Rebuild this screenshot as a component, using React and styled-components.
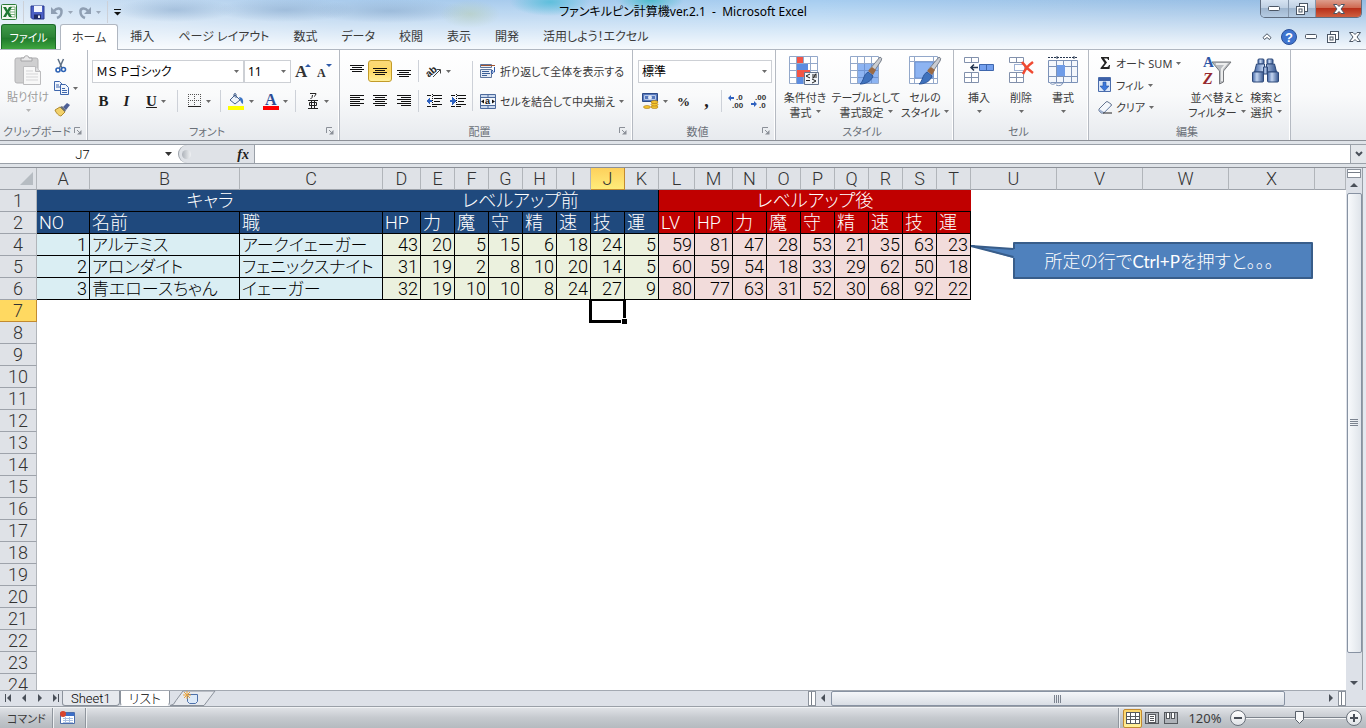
import React, { useState } from "react";
import styled, { createGlobalStyle, css } from "styled-components";

const uiFont = `"Noto Sans", "Noto Sans CJK JP", sans-serif`;
const cellFont = `Roboto, "Noto Sans CJK JP", sans-serif`;

const GlobalStyle = createGlobalStyle`
    * {
        box-sizing: border-box;
    }
    body {
        margin: 0;
        overflow: hidden;
        font-family: ${uiFont};
        font-size: 12px;
        line-height: 15px;
        color: #3b3b3b;
        font-feature-settings: "palt";
    }
    button, select, input {
        font: inherit;
        font-feature-settings: inherit;
        color: inherit;
        margin: 0;
        padding: 0;
        border: none;
        background: none;
        border-radius: 0;
        outline: none;
    }
    svg {
        display: block;
        flex: none;
        overflow: visible;
    }
`;

const Window = styled.div`
    display: flex;
    flex-direction: column;
    height: 100vh;
    background: #dfe3e8;
`;

/* ---------- title bar and tabs ---------- */

const Glass = styled.header`
    background:
        radial-gradient(ellipse 40px 14px at 550px 2px, #5fbfdc, transparent),
        radial-gradient(ellipse 34px 12px at 650px 0px, #4fbccd, transparent),
        radial-gradient(ellipse 30px 14px at 470px 14px, #b3c9a877, transparent),
        radial-gradient(ellipse 60px 12px at 175px 10px, #7d9fc477, transparent),
        radial-gradient(ellipse 70px 12px at 285px 10px, #7d9fc477, transparent),
        radial-gradient(ellipse 80px 12px at 390px 11px, #7d9fc477, transparent),
        linear-gradient(to bottom, transparent, #ffffff88 60%, #ffffffe6),
        linear-gradient(to right, #d5e5f5, #a9cbec 25%, #a6cdf0 60%, #9fc4e8 78%, #93bbe3);
    border-bottom: 1px solid #b0b7c1;
`;

const TitleBar = styled.div`
    display: grid;
    grid-template-columns: 1fr auto 1fr;
    height: 24px;
`;

const QuickAccess = styled.div`
    display: flex;
    align-items: center;
    gap: 5px;
    padding-left: 1px;
`;

const Title = styled.h1`
    margin: 0;
    font-size: 12px;
    font-weight: 400;
    line-height: 23px;
    color: #000;
    white-space: nowrap;
`;

const WindowButtons = styled.div`
    display: flex;
    justify-self: end;
    height: 18px;
    margin-right: 4px;
    border: 1px solid #5f6d80;
    border-top: none;
    border-radius: 0 0 5px 5px;
    overflow: hidden;
`;

const WindowButton = styled.button`
    display: flex;
    align-items: center;
    justify-content: center;
    width: ${(props) => (props.$close ? "46px" : "27px")};
    border-left: 1px solid #8495aa;
    background: ${(props) =>
        props.$close
            ? "linear-gradient(#dd9d8c, #cf6a52 45%, #b8301a 50%, #cf5f40)"
            : "linear-gradient(#d6e3f1, #bfd0e3 45%, #9fb6cf 50%, #b5cbe2)"};
    &:first-child {
        border-left: none;
    }
`;

const TabBar = styled.nav`
    display: flex;
    height: 25px;
    padding-left: 1px;
`;

const FileTab = styled.button`
    width: 55px;
    margin-right: 4px;
    border: 1px solid #1c6b2a;
    border-bottom: none;
    border-radius: 3px 3px 0 0;
    background: linear-gradient(#3f9b4a, #2b8336 50%, #1f7a2c 55%, #3fa63f);
    color: #fff;
    font-size: 11px;
`;

const Tab = styled.button`
    padding: 0 12px;
    white-space: nowrap;
    border: 0 solid #b0b7c1;
    ${(props) =>
        props.$active &&
        css`
            border-width: 1px 1px 0;
            padding: 0 11px;
            border-radius: 3px 3px 0 0;
            background: #fff;
            margin-bottom: -1px;
        `}
`;

const TabTools = styled.div`
    display: flex;
    align-items: center;
    margin-left: auto;
`;

const TabTool = styled.button`
    display: flex;
    justify-content: center;
    width: 22px;
`;

/* ---------- ribbon ---------- */

const RibbonBar = styled.div`
    display: flex;
    flex: none;
    height: 91px;
    background: linear-gradient(#ffffff, #f9fafb 50%, #e7eaee);
    border-bottom: 1px solid #8c9097;
`;

const Group = styled.section`
    display: flex;
    flex-direction: column;
    flex: none;
    width: ${(props) => props.$width}px;
    border-right: 1px solid #b5bac2;
    box-shadow: inset -1px 0 #fff;
`;

const GroupBody = styled.div`
    display: flex;
    flex: 1;
    padding: ${(props) => props.$pad || "0"};
`;

const GroupLabel = styled.div`
    display: flex;
    align-items: center;
    height: 18px;
    padding-right: 5px;
    font-size: 11px;
    color: #6a7078;
    span {
        flex: 1;
        text-align: center;
        white-space: nowrap;
    }
`;

const Stack = styled.div`
    display: flex;
    flex-direction: column;
`;

const ToolRow = styled.div`
    display: flex;
    align-items: center;
    height: 30px;
`;

const Tool = styled.button`
    display: flex;
    align-items: center;
    justify-content: ${(props) => (props.$left ? "flex-start" : "center")};
    gap: 4px;
    flex: none;
    width: ${(props) => (props.$width ? props.$width + "px" : "auto")};
    height: 22px;
    font-size: 11px;
    white-space: nowrap;
    ${(props) =>
        props.$on &&
        css`
            border: 1px solid #c29b29;
            border-radius: 3px;
            background: linear-gradient(#fbd978, #fdd966 50%, #fff09a);
        `}
`;

const Letter = styled.span`
    font-family: "Liberation Serif", serif;
    font-size: ${(props) => props.$size || 15}px;
    font-weight: 700;
    color: #1e1e1e;
    font-style: ${(props) => (props.$italic ? "italic" : "normal")};
    text-decoration: ${(props) => (props.$underline ? "underline" : "none")};
`;

const Divider = styled.i`
    width: 1px;
    height: ${(props) => (props.$tall ? 50 : 22)}px;
    margin: ${(props) => (props.$tall ? "5px 7px 0 3px" : `0 ${props.$gap || 3}px`)};
    background: #cdd1d8;
`;

const BigTool = styled.button`
    display: flex;
    flex-direction: column;
    align-items: center;
    flex: none;
    width: ${(props) => props.$width}px;
    font-size: 11px;
    white-space: nowrap;
    color: ${(props) => (props.$muted ? "#9a9a9a" : "inherit")};
    svg:first-child {
        margin-bottom: 2px;
    }
`;

const LabelLine = styled.span`
    display: flex;
    align-items: center;
    justify-content: center;
    gap: 4px;
    height: 15px;
`;

const Combo = styled.label`
    display: flex;
    align-items: center;
    width: ${(props) => props.$width}px;
    height: 23px;
    padding: 0 4px 0 3px;
    border: 1px solid #cdd0d5;
    background: #fff;
    color: #000;
    select {
        appearance: none;
        flex: 1;
        min-width: 0;
    }
`;

/* ---------- formula bar ---------- */

const FormulaBar = styled.div`
    display: flex;
    flex: none;
    height: 20px;
    margin: 3px 0;
    border: solid #9aa0a8;
    border-width: 1px 0;
    background: #fff;
`;

const NameBox = styled.label`
    display: flex;
    align-items: center;
    width: 178px;
    padding-right: 6px;
    input {
        flex: 1;
        min-width: 0;
        font-family: ${cellFont};
        font-size: 13px;
        font-weight: 300;
        text-align: center;
        color: #000;
    }
`;

const FxArea = styled.div`
    display: flex;
    align-items: center;
    justify-content: space-between;
    width: 77px;
    padding: 0 5px 0 3px;
    border-left: 1px solid #9aa0a8;
    border-right: 1px solid #9aa0a8;
    border-radius: 10px 0 0 10px;
    background: #dfe2e7;
`;

const Knob = styled.i`
    width: 9px;
    height: 9px;
    border-radius: 50%;
    background: linear-gradient(to right, #aeb3ba, #f0f2f4);
`;

const FormulaInput = styled.input`
    flex: 1;
`;

const ExpandButton = styled.button`
    display: flex;
    align-items: center;
    justify-content: center;
    width: 16px;
    border-left: 1px solid #9aa0a8;
    background: #e4e7eb;
`;

/* ---------- sheet ---------- */

const Workspace = styled.main`
    display: flex;
    flex: 1;
    min-height: 0;
    border-top: 1px solid #8c9097;
`;

const SheetArea = styled.div`
    position: relative;
    flex: 1;
    min-width: 0;
    overflow: hidden;
    background: #fff;
`;

const Grid = styled.table`
    width: 100%;
    table-layout: fixed;
    border-collapse: separate;
    border-spacing: 0;
    font-family: ${cellFont};
    font-size: 18px;
    font-weight: 300;
    line-height: 20px;
    color: #000;
    th, td {
        height: 22px;
        padding: 0 2px;
        font-weight: 300;
        white-space: nowrap;
    }
`;

const HeadCell = styled.th`
    border-right: 1px solid #b1b5ba;
    border-bottom: 1px solid #9ea3ab;
    background: #dfe2e7;
    color: #333;
    ${(props) =>
        props.$on &&
        css`
            border-color: #c28a30;
            background: ${props.scope === "col" ? "linear-gradient(#fdd05c, #ffec7a)" : "#ffd961"};
        `}
`;

const Corner = styled.td`
    border-right: 1px solid #b1b5ba;
    border-bottom: 1px solid #9ea3ab;
    background: #dfe2e7;
    svg {
        margin-left: auto;
    }
`;

const fills = {
    blue: "#1f497d",
    red: "#c00000",
    sky: "#daeef3",
    green: "#ebf1de",
    pink: "#f2dcdb",
};

const Cell = styled.td`
    background: ${(props) => fills[props.$fill]};
    color: ${(props) => (props.$fill === "blue" || props.$fill === "red" ? "#fff" : "#000")};
    font-size: ${(props) => (props.$name ? 17 : 18)}px;
    text-align: ${(props) => props.$align || "left"};
    border-bottom: 1px solid #000;
    border-right: ${(props) => (props.$open ? "none" : "1px solid #000")};
`;

const EmptyCell = styled.td`
    position: relative;
`;

const Selection = styled.div`
    position: absolute;
    inset: -1px -1px -1px -2px;
    border: 3px solid #000;
    border-top-width: 2px;
    &::after {
        content: "";
        position: absolute;
        right: -4px;
        bottom: -4px;
        width: 5px;
        height: 5px;
        background: #000;
        outline: 1px solid #fff;
    }
`;

const Callout = styled.div`
    position: absolute;
    top: 74px;
    left: 970px;
    display: flex;
`;

const CalloutText = styled.div`
    width: 300px;
    height: 37px;
    margin-left: -2px;
    padding-right: 8px;
    border: 2px solid #385d8a;
    border-radius: 1px;
    background: #4f81bd;
    color: #fff;
    font-family: Lato, "Noto Sans CJK JP", sans-serif;
    font-size: 18px;
    font-weight: 300;
    line-height: 34px;
    text-align: center;
    white-space: nowrap;
    kbd {
        font-family: inherit;
        font-size: 17px;
        font-weight: 400;
    }
`;

const CalloutTail = styled.svg`
    z-index: 1;
`;

const VScroll = styled.div`
    display: flex;
    flex-direction: column;
    align-items: center;
    width: 16px;
    background: #dde1e8;
`;

const SplitBox = styled.div`
    width: 14px;
    height: 9px;
    margin: 1px 0 0;
    border: 1px solid #8b929c;
    background: linear-gradient(#fff 2px, #777e88 2px, #777e88 3px, #fff 3px);
`;

const ScrollArrow = styled.button`
    display: flex;
    align-items: center;
    justify-content: center;
    flex: none;
    width: 15px;
    height: 15px;
`;

const VThumb = styled.div`
    display: flex;
    align-items: center;
    justify-content: center;
    width: 15px;
    flex: 458;
    border: 1px solid #8792a2;
    border-radius: 2px;
    background: linear-gradient(to right, #f8fafc, #dfe4ea);
`;

const VRest = styled.div`
    flex: 22;
`;

const Edge = styled.div`
    width: 4px;
    border-left: 1px solid #9aa0a8;
    background: #e4e8ef;
`;

/* ---------- sheet tabs and horizontal scroll ---------- */

const SheetBar = styled.div`
    display: flex;
    flex: none;
    height: 17px;
    padding-right: 20px;
    border-bottom: 1px solid #9aa0a8;
    background: #dde1e8;
`;

const SheetTabs = styled.div`
    display: flex;
    flex: 3;
    padding-left: 2px;
    border-top: 1px solid #a3a9b2;
    font-family: ${cellFont};
    font-size: 13px;
    font-weight: 300;
`;

const NavButton = styled.button`
    display: flex;
    align-items: center;
    justify-content: center;
    width: 15px;
`;

const SheetTab = styled.button`
    height: 15px;
    padding: 0 8px;
    border: solid #8b929c;
    border-width: 0 1px 1px 1px;
    border-radius: 0 0 4px 3px;
    background: ${(props) => (props.$active ? "#fff" : "#e6e9ee")};
    border-bottom-color: ${(props) => (props.$active ? "#fff" : "#8b929c")};
    color: #000;
    white-space: nowrap;
`;

const HScroll = styled.div`
    display: flex;
    flex: 2;
    border-top: 1px solid #a3a9b2;
`;

const HThumb = styled.div`
    display: flex;
    align-items: center;
    justify-content: center;
    flex: 450;
    border: 1px solid #8792a2;
    border-radius: 2px;
    background: linear-gradient(#f4f6f9, #d9dee5);
`;

const HRest = styled.div`
    flex: 38;
`;

const SplitHandle = styled.i`
    width: 8px;
    border: 1px solid #8b929c;
    background: linear-gradient(to right, #fff 2px, #777e88 2px, #777e88 3px, #fff 3px);
`;

/* ---------- status bar ---------- */

const StatusBar = styled.footer`
    display: flex;
    align-items: center;
    flex: none;
    height: 21px;
    padding: 0 4px 0 7px;
    border-top: 1px solid #f1f3f5;
    background: linear-gradient(#dfe2e6, #c5c9ce 50%, #b5babf);
    font-size: 11px;
`;

const StatusRule = styled.i`
    width: 2px;
    height: 20px;
    margin: 0 ${(props) => props.$gap || 6}px;
    border-left: 1px solid #8f959d;
    background: #eef0f2;
`;

const ViewButton = styled.button`
    display: flex;
    align-items: center;
    justify-content: center;
    width: 19px;
    height: 19px;
    border: 1px solid ${(props) => (props.$on ? "#c28a30" : "transparent")};
    border-radius: 2px;
    background: ${(props) => (props.$on ? "linear-gradient(#fbd46a, #fff09a)" : "none")};
`;

const ZoomValue = styled.button`
    width: 50px;
    font-size: 13px;
    text-align: center;
`;

const RoundButton = styled.button`
    display: flex;
    align-items: center;
    justify-content: center;
    width: 16px;
    height: 16px;
    border: 1px solid #6a717b;
    border-radius: 50%;
    background: linear-gradient(#fff, #dfe2e6);
`;

const thumbShape = encodeURIComponent(
    `<svg xmlns="http://www.w3.org/2000/svg" width="10" height="14"><path d="M.5.5h8v8l-4 4-4-4z" fill="#f6f7f8" stroke="#59616b"/></svg>`
);

const ZoomSlider = styled.input`
    appearance: none;
    width: 100px;
    height: 16px;
    background: linear-gradient(transparent 7px, #7c838c 7px, #7c838c 8px, #f3f4f5 8px, #f3f4f5 9px, transparent 9px);
    &::-webkit-slider-thumb {
        appearance: none;
        width: 10px;
        height: 14px;
        background: url("data:image/svg+xml,${thumbShape}") no-repeat;
    }
`;

/* ---------- icons ---------- */

const Arrow = ({ color = "#6b6b6b" }) => (
    <svg width="5" height="3" viewBox="0 0 5 3"><path d="M0 0h5L2.5 3z" fill={color} /></svg>
);

const Launcher = () => (
    <svg width="8" height="8" viewBox="0 0 8 8" fill="none" stroke="#8b9098">
        <path d="M.5 6V.5H6M3 3l3 3" /><path d="M7.500 3v4.500H3z" fill="#8b9098" stroke="none" />
    </svg>
);

const ExcelLogo = () => (
    <svg width="16" height="16" viewBox="0 0 16 16">
        <rect x=".5" y=".5" width="15" height="15" rx="1" fill="#f3f8f0" stroke="#2c7b38" />
        <path d="M9 3h5v10H9z" fill="#fff" stroke="#7fb380" />
        <path d="M9 5.500h5M9 8h5M9 10.500h5" stroke="#7fb380" />
        <path d="M2 3h3l1.500 3L8 3h3L8 8l3 5H8L6.500 10 5 13H2l3-5z" fill="#1f7a34" />
    </svg>
);

const SaveIcon = () => (
    <svg width="15" height="15" viewBox="0 0 15 15">
        <path d="M1 1h13v13H2.500L1 12.500z" fill="#4a5fc4" stroke="#2b3a8f" />
        <path d="M4 1h8v6H4z" fill="#f2f5fc" /><path d="M4 9.500h7V14H4z" fill="#1f2b66" />
        <path d="M8 10.500h2V13H8z" fill="#e7ebf8" />
    </svg>
);

const UndoIcon = ({ flip }) => (
    <svg width="14" height="13" viewBox="0 0 14 13" fill="none">
        <g transform={flip ? "matrix(-1 0 0 1 14 0)" : undefined}>
            <path d="M4 5C7 1 12 2 11.500 6c0 3-2 5-4.500 6" stroke="#8f9fb3" strokeWidth="2.500" />
            <path d="M1 1v7h7z" fill="#8f9fb3" />
        </g>
    </svg>
);

const PasteIcon = () => (
    <svg width="32" height="32" viewBox="-2 0 32 32">
        <rect x="1" y="3" width="23" height="25" rx="2" fill="#cfcfd0" stroke="#b3b3b5" />
        <path d="M7 6V3h3c0-3 5-3 5 0h3v3z" fill="#e9e9ea" stroke="#a5a5a7" />
        <path d="M9.500 11.500h12l5 5v13h-17z" fill="#f8f8f8" stroke="#bcbcbe" />
        <path d="M21.500 11.500v5h5" fill="#dedee0" stroke="#bcbcbe" />
        <path d="M12 16h7M12 19h12M12 22h12M12 25h12" stroke="#d5d5d7" />
    </svg>
);

const CutIcon = () => (
    <svg width="14" height="14" viewBox="0 0 14 14" fill="none">
        <path d="M4 0l4 9M9.500 0L5.500 9" stroke="#5f7084" strokeWidth="1.500" />
        <circle cx="4" cy="11" r="2" stroke="#2c62b5" strokeWidth="1.600" />
        <circle cx="9.500" cy="10.500" r="2" stroke="#2c62b5" strokeWidth="1.600" />
    </svg>
);

const CopyIcon = () => (
    <svg width="15" height="14" viewBox="0 0 15 14" fill="#f3f7fd" stroke="#3f67ad">
        <path d="M.5.5h5l3 3v6h-8z" /><path d="M2 4h3M2 6h4" />
        <path d="M6.500 3.500h5l3 3v7h-8z" /><path d="M8 7.500h3M8 9.500h5M8 11.500h5" />
    </svg>
);

const BrushIcon = () => (
    <svg width="16" height="14" viewBox="0 0 16 14">
        <path d="M1 7l5-3 5 5-4 4c-2 0-5-3-6-6z" fill="#f2d16b" stroke="#b08a2c" />
        <path d="M6 4l2-1 4 4-1 2z" fill="#6b7078" /><path d="M9 4l4-4 3 2-4 5z" fill="#4d5f96" />
    </svg>
);

const LetterGrow = ({ down }) => (
    <svg width="16" height="16" viewBox="0 0 16 16">
        <text x="0" y="14" fontFamily="Liberation Serif, serif" fontWeight="700" fontSize={down ? 12 : 17} fill="#333">A</text>
        <path d={down ? "M9 1h6l-3 3z" : "M10 4h6l-3-3z"} fill="#2f5aa8" />
    </svg>
);

const BorderIcon = () => (
    <svg width="14" height="14" viewBox="0 0 14 14" shapeRendering="crispEdges">
        <path d="M.5 0v13M6.500 0v13M12.500 0v13M0 .5h13M0 6.500h13" stroke="#555" strokeDasharray="1 1" />
        <path d="M0 12.500h13" stroke="#222" />
    </svg>
);

const FillIcon = () => (
    <svg width="17" height="17" viewBox="0 0 17 17">
        <path d="M2 7l5-5 5 5-5 4z" fill="#eef3fa" stroke="#44608c" />
        <path d="M6 4V1q1.500-1 2 0v4" fill="none" stroke="#44608c" />
        <path d="M11 4q5 0 4 7-2-1-3-4z" fill="#3a73c4" /><path d="M0 13h16v4H0z" fill="#ff0" />
    </svg>
);

const FontColorIcon = () => (
    <svg width="16" height="17" viewBox="0 0 16 17">
        <text x="2" y="12" fontFamily="Liberation Serif, serif" fontWeight="700" fontSize="16" fill="#2d4d96">A</text>
        <path d="M0 13h16v4H0z" fill="#f00" />
    </svg>
);

const RubyIcon = () => (
    <svg width="14" height="18" viewBox="0 0 14 18" fill="none" stroke="#222">
        <path d="M4 1.500h6q0 2-2 3M6.500 3q0 3-2 4" />
        <path d="M2 8.500h10M2 16.500h10M3.500 10.500h7v3h-7zM5.500 8v8M8.500 8v8" />
    </svg>
);

// each entry is [x, length] of one line of text
const lineSets = {
    full: [[0, 14], [2, 10], [0, 14], [2, 10]],
    left: [[0, 14], [0, 10], [0, 14], [0, 10], [0, 14], [0, 10]],
    center: [[0, 14], [2, 10], [0, 14], [2, 10], [0, 14], [2, 10]],
    right: [[0, 14], [4, 10], [0, 14], [4, 10], [0, 14], [4, 10]],
};

const LinesIcon = ({ kind, top = 1 }) => (
    <svg width="14" height="14" viewBox="0 0 14 14" shapeRendering="crispEdges" fill="#111">
        {lineSets[kind].map(([x, w], i) => (
            <rect key={i} x={x} y={top + i * 2} width={w} height="1" />
        ))}
    </svg>
);

const RotateIcon = () => (
    <svg width="16" height="14" viewBox="0 0 16 14">
        <text x="0" y="12" transform="rotate(-40 4 9)" fontFamily="Liberation Sans, sans-serif" fontWeight="700" fontSize="10" fill="#222">ab</text>
        <path d="M7 13l7-7M10.500 5.500h4v4" fill="none" stroke="#444" />
    </svg>
);

const IndentIcon = ({ right }) => (
    <svg width="16" height="14" viewBox="0 0 16 14" shapeRendering="crispEdges">
        <path d="M1 1.500h4M7 1.500h9M8 4.500h8M8 7.500h6M7 10.500h9M1 12.500h4M7 12.500h4" stroke="#111" />
        <path d="M6.500 0v14" stroke="#111" strokeDasharray="1 1" />
        <path d={right ? "M0 6h2V3l4 4-4 4V8H0z" : "M6 6H4V3L0 7l4 4V8h2z"} fill="#2f62c0" />
    </svg>
);

const WrapIcon = () => (
    <svg width="16" height="16" viewBox="0 0 16 16">
        <path d="M.5 1.500h11v3H.5zM.5 6.500h11v8H.5z" fill="#e6ecf5" stroke="#5f769c" />
        <path d="M1 2.500h14" stroke="#a0522d" /><path d="M2 8.500h7M2 10.500h8M2 12.500h5" stroke="#3b5f96" />
        <path d="M14.500 4v5h-3M13 7l-2 2 2 2" fill="none" stroke="#2f5aa8" />
    </svg>
);

const MergeIcon = () => (
    <svg width="16" height="15" viewBox="0 0 16 15">
        <path d="M.5.5h15v14H.5zM.5 3.500h15M.5 11.500h15M8 .5v3M8 11.500v3" fill="#c9d8ee" stroke="#4c6a9c" />
        <path d="M1 4h14v7H1z" fill="#f5f8fc" />
        <text x="5" y="10" fontFamily="Liberation Sans, sans-serif" fontWeight="700" fontSize="9" fill="#111">a</text>
        <path d="M1 7.500l3-2v4zM15 7.500l-3-2v4z" fill="#111" />
    </svg>
);

const MoneyIcon = () => (
    <svg width="17" height="16" viewBox="0 0 17 16">
        <path d="M.5.5h15v8H.5z" fill="#5578bd" stroke="#2d4a86" />
        <path d="M2.500 2.500h11v4h-11z" fill="none" stroke="#b7c8e8" /><circle cx="8" cy="4.500" r="2" fill="#dfe8f7" />
        <g fill="#f4c430" stroke="#a87412" strokeWidth=".6">
            <ellipse cx="12.500" cy="14" rx="3.500" ry="1.500" /><ellipse cx="12.500" cy="11.500" rx="3.500" ry="1.500" />
            <ellipse cx="12.500" cy="9" rx="3.500" ry="1.500" /><ellipse cx="5" cy="14" rx="3.500" ry="1.500" />
        </g>
    </svg>
);

const DecimalIcon = ({ less }) => (
    <svg width="17" height="14" viewBox="0 0 17 14" fontFamily="Liberation Sans, sans-serif" fontWeight="700" fontSize="8" fill="#333">
        <text x={less ? 4 : 8} y="6">{less ? ".00" : ".0"}</text>
        <text x={less ? 8 : 4} y="14">{less ? ".0" : ".00"}</text>
        <path d={less ? "M0 9h3V7l3 3-3 3v-2H0z" : "M6 3H3V1L0 4l3 3V5h3z"} fill="#2f62c0" />
    </svg>
);

const gridLines = "M.5.500h28v27H.5zM7.500.5v27M14.500.5v27M21.500.5v27M.5 7.500h28M.5 14.500h28M.5 21.500h28";

const PaintBrush = () => (
    <>
        <path d="M30 1q3 1 1 4L23 17l-4-3z" fill="#c9ccd2" stroke="#7a818c" />
        <path d="M22 11l4 3-3 5-5-4z" fill="#9a6a45" />
        <path d="M18 16l5 4c-2 6-8 8-13 8 4-3 3-9 8-12z" fill="#3f72bd" stroke="#2d569a" />
    </>
);

const ConditionIcon = () => (
    <svg width="32" height="32" viewBox="0 0 32 32">
        <path d={gridLines} fill="#fff" stroke="#93a8ca" />
        <path d="M8 1h6v6H8zM8 14h13v7H8z" fill="#f25546" /><path d="M8 8h11v6H8zM8 21h6v7H8z" fill="#5c8ce0" />
        <path d="M15.500 16.500h14v12h-14z" fill="#f4f7fb" stroke="#65758f" />
        <path d="M21 18l-4 2 4 2M17 24.500h4M23 19h5M23 21h5M27 17.500l-3 5M23 23l4 2-4 2" fill="none" stroke="#222" />
    </svg>
);

const TableStyleIcon = () => (
    <svg width="32" height="32" viewBox="0 0 32 32">
        <path d={gridLines} fill="#fff" stroke="#93a8ca" />
        <path d="M8 8h20v19H8z" fill="#8db4f2" />
        <path d="M14.500 8v19M21.500 8v19M8 14.500h20M8 21.500h20" stroke="#6e94d4" />
        <PaintBrush />
    </svg>
);

const CellStyleIcon = () => (
    <svg width="32" height="32" viewBox="0 0 32 32">
        <path d="M.5.5h28v27H.5zM5.500.5v27M24.500.5v27M.5 5.500h28M.5 22.500h28" fill="#fff" stroke="#93a8ca" />
        <path d="M6 6h18v16H6z" fill="#8db4f2" stroke="#6e94d4" />
        <PaintBrush />
    </svg>
);

const InsertIcon = () => (
    <svg width="32" height="32" viewBox="0 0 32 32" fill="#fff" stroke="#8291ac">
        <path d="M1.500 1.500h14v5h-14zM8.500 1.500v5M1.500 16.500h14v10h-14zM8.500 16.500v10M1.500 21.500h14" />
        <path d="M16.500 8.500h14v6h-14zM23.500 8.500v6" fill="#74a0ee" stroke="#3f67ad" />
        <path d="M8 11.500h7M11 8.500l-3 3 3 3" fill="none" stroke="#23344f" strokeWidth="1.500" />
    </svg>
);

const DeleteIcon = () => (
    <svg width="32" height="32" viewBox="0 0 32 32" fill="#fff" stroke="#8291ac">
        <path d="M4.500 1.500h14v5h-14zM11.500 1.500v5M4.500 16.500h14v10h-14zM11.500 16.500v10M4.500 21.500h14" />
        <path d="M9.500 8.500h10v6h-10z" stroke="#3f67ad" strokeDasharray="1 1" />
        <path d="M17 6q4 6 11 11M28 6q-7 5-10 12" fill="none" stroke="#f04a32" strokeWidth="2.500" />
    </svg>
);

const FormatIcon = () => (
    <svg width="32" height="32" viewBox="0 0 32 32" fill="none" stroke="#7c92b8">
        <path d="M1.500 4.500h29v22h-29zM9.500 4.500v22M16.500 4.500v22M24.500 4.500v22M1.500 10.500h29M1.500 20.500h29" fill="#f4f7fc" />
        <path d="M10 9h8v11h-8z" fill="#6f9ce8" stroke="none" />
        <path d="M1 1.500h29" stroke="#26364f" strokeDasharray="2 1" /><path d="M10 0v3M27 0v3" stroke="#26364f" />
        <path d="M2 26q3 4 7 1h7q-2 4-7 2" fill="#fff" />
    </svg>
);

const SigmaIcon = () => (
    <svg width="14" height="14" viewBox="0 0 14 14">
        <path d="M3 1h8v3h-1q0-1.500-1-1.500H6L9 6.500 5.500 11H9q1.500 0 2-2h1l-.5 4H2.500v-1L6.500 7 3 2z" fill="#222" />
    </svg>
);

const FillDownIcon = () => (
    <svg width="14" height="16" viewBox="0 0 14 16">
        <path d="M.5.5h12v14H.5z" fill="#dbe7fa" stroke="#4a6cab" /><path d="M1 1h11v3H1z" fill="#3c60a8" />
        <path d="M5 5h3v4h3l-4.500 5L2 9h3z" fill="#3b77dc" stroke="#23509f" strokeWidth=".6" />
    </svg>
);

const EraserIcon = () => (
    <svg width="14" height="14" viewBox="0 0 14 14">
        <path d="M1 9l7-7q1-1 2 0l3 2q1 1 0 2l-7 7H3l-2-2z" fill="#f4f7fb" stroke="#64748f" />
        <path d="M1 9l5 3 7-7v1l-7 7H3l-2-2z" fill="#9fb1cf" /><path d="M5 13h9" stroke="#222" />
    </svg>
);

const SortIcon = () => (
    <svg width="32" height="32" viewBox="0 0 32 32">
        <path d="M11 6h19l-7.500 9v11l-4 2V15z" fill="#b9bcc0" stroke="#77797d" />
        <path d="M15 8h10l-4 5v12" fill="none" stroke="#eceded" strokeWidth="2" />
        <text x="2" y="11" fontFamily="Liberation Serif, serif" fontWeight="700" fontSize="15" fill="#2d57a6">A</text>
        <text x="2" y="28" fontFamily="Liberation Serif, serif" fontStyle="italic" fontWeight="700" fontSize="16" fill="#96292e">Z</text>
    </svg>
);

const FindIcon = () => (
    <svg width="30" height="32" viewBox="0 0 30 32" stroke="#2d4878">
        <defs>
            <linearGradient id="lens"><stop stopColor="#4266a6" /><stop offset=".4" stopColor="#c3d5f0" /><stop offset="1" stopColor="#34558f" /></linearGradient>
        </defs>
        <g fill="url(#lens)">
            <rect x="7" y="3" width="6" height="5" rx="1" /><rect x="16" y="3" width="6" height="5" rx="1" />
            <path d="M5.500 8h8v8h-10zM15.500 8h8l2 8h-10z" />
            <rect x="1.500" y="16" width="11" height="10" rx="1" /><rect x="16.500" y="16" width="11" height="10" rx="1" />
            <path d="M12.500 11h4v7h-4z" />
        </g>
    </svg>
);

const Triangle = ({ dir, bar }) => (
    <svg width="9" height="9" viewBox="0 0 9 9" fill="#4a5059">
        <path d={{ left: "M6 0v8L2 4z", right: "M3 0v8l4-4z", up: "M0 6h8L4 2z", down: "M0 3h8L4 7z" }[dir]} />
        {bar && <path d={dir === "left" ? "M0 0h1v8H0z" : "M8 0h1v8H8z"} />}
    </svg>
);

const NewSheetIcon = () => (
    <svg width="46" height="15" viewBox="0 0 46 15">
        <path d="M0 14.500q4 0 6-5L13 0h32L34 14.500z" fill="#e6e9ee" stroke="#8b929c" />
        <path d="M17.500 3.500h10v7l-2 2h-6l-2-2z" fill="#dce9f8" stroke="#4c70aa" />
        <path d="M17 0v8M13 4h8M14 1l6 6M20 1l-6 6" stroke="#e8a33c" />
    </svg>
);

const MacroIcon = () => (
    <svg width="15" height="14" viewBox="0 0 15 14">
        <path d="M.5 1.500h14v11H.5z" fill="#fff" stroke="#4a6cab" /><path d="M1 2h13v3H1z" fill="#3c6fc8" />
        <path d="M3 7.500h10M3 9.500h10M3 11.500h10M5.500 6v6M9.500 6v6" stroke="#a9bfe2" />
        <circle cx="3" cy="3" r="3" fill="#d9442e" />
    </svg>
);

const ViewIcon = ({ kind }) => (
    <svg width="14" height="12" viewBox="0 0 14 12" fill="none" stroke="#55585d" shapeRendering="crispEdges">
        <path d="M.5.500h13v11H.5z" fill={kind === "grid" ? "#fff" : "#aeb2b8"} />
        {kind === "grid" && <path d="M.5 4.500h13M.5 7.500h13M4.500.5v11M9.500.5v11" />}
        {kind === "page" && <path d="M3.500 2.500h7v8h-7zM5 4.500h4M5 6.500h4M5 8.500h4" fill="#fff" />}
        {kind === "break" && <path d="M2.500.5h3v6h-3zM7.500.5h3v6h-3z" fill="#fff" />}
    </svg>
);

const Grip = ({ vertical }) => (
    <svg width="8" height="8" viewBox="0 0 8 8" stroke="#7b838f" shapeRendering="crispEdges">
        <path d={vertical ? "M.5 0v8M2.500 0v8M4.500 0v8M6.500 0v8" : "M0 .5h8M0 2.500h8M0 4.500h8M0 6.500h8"} />
    </svg>
);

const MinimizeShape = () => (
    <svg width="13" height="6" viewBox="0 0 13 6"><rect x=".5" y=".5" width="11" height="4" rx="1" fill="#fff" stroke="#4b5665" /></svg>
);

const RestoreShape = () => (
    <svg width="12" height="12" viewBox="0 0 12 12" fill="#fff" stroke="#4b5665">
        <rect x="3.500" y=".5" width="8" height="8" /><rect x=".5" y="3.500" width="8" height="8" /><rect x="3" y="6" width="3" height="3" />
    </svg>
);

const CloseShape = () => (
    <svg width="12" height="10" viewBox="0 0 12 10">
        <path d="M.5.5h3.500l2 2 2-2h3.500L8 5l3.500 4.500H8l-2-2-2 2H.5L4 5z" fill="#fff" stroke="#4b5665" />
    </svg>
);

/* ---------- data ---------- */

const tabs = ["ホーム", "挿入", "ページ レイアウト", "数式", "データ", "校閲", "表示", "開発", "活用しよう！エクセル"];

const columns = [
    ["A", 53], ["B", 150], ["C", 143], ["D", 38], ["E", 34], ["F", 34], ["G", 34], ["H", 34],
    ["I", 34], ["J", 34], ["K", 34], ["L", 36], ["M", 38], ["N", 34], ["O", 34], ["P", 34],
    ["Q", 34], ["R", 34], ["S", 34], ["T", 34], ["U", 86], ["V", 86], ["W", 86], ["X", 86], ["", null],
];

const titles = ["NO", "名前", "職", "HP", "力", "魔", "守", "精", "速", "技", "運", "LV", "HP", "力", "魔", "守", "精", "速", "技", "運"];

const records = [
    [4, 1, "アルテミス", "アークイェーガー", 43, 20, 5, 15, 6, 18, 24, 5, 59, 81, 47, 28, 53, 21, 35, 63, 23],
    [5, 2, "アロンダイト", "フェニックスナイト", 31, 19, 2, 8, 10, 20, 14, 5, 60, 59, 54, 18, 33, 29, 62, 50, 18],
    [6, 3, "青エロースちゃん", "イェーガー", 32, 19, 10, 10, 8, 24, 27, 9, 80, 77, 63, 31, 52, 30, 68, 92, 22],
];

const emptyRows = Array.from({ length: 18 }, (_, i) => i + 7);

const fillOf = (i) => (i < 3 ? "sky" : i < 11 ? "green" : "pink");

/* ---------- parts ---------- */

const RibbonGroup = ({ label, width, pad, launcher, children }) => (
    <Group $width={width} aria-label={label}>
        <GroupBody $pad={pad}>{children}</GroupBody>
        <GroupLabel>
            <span>{label}</span>
            {launcher && <Launcher />}
        </GroupLabel>
    </Group>
);

const Select = ({ width, label, value }) => (
    <Combo $width={width}>
        <select aria-label={label} defaultValue={value}>
            <option>{value}</option>
        </select>
        <Arrow />
    </Combo>
);

const Big = ({ icon, lines, width, muted }) => (
    <BigTool $width={width} $muted={muted}>
        {icon}
        {lines.map((line, i) => (
            <LabelLine key={i}>
                {line}
                {i === lines.length - 1 && <Arrow color={muted ? "#b5b5b5" : undefined} />}
            </LabelLine>
        ))}
    </BigTool>
);

const Ribbon = () => (
    <RibbonBar>
        <RibbonGroup label="クリップボード" width={88} pad="5px 0 0 2px" launcher>
            <Big icon={<PasteIcon />} lines={["貼り付け", ""]} width={52} muted />
            <Stack>
                <Tool $left aria-label="切り取り"><CutIcon /></Tool>
                <Tool $left aria-label="コピー"><CopyIcon /><Arrow /></Tool>
                <Tool $left aria-label="書式のコピー"><BrushIcon /></Tool>
            </Stack>
        </RibbonGroup>
        <RibbonGroup label="フォント" width={252} pad="6px 0 0 4px" launcher>
            <Stack>
                <ToolRow>
                    <Select label="フォント" width={152} value="ＭＳ Ｐゴシック" />
                    <Select label="フォント サイズ" width={47} value="11" />
                    <Tool $width={24} aria-label="拡大"><LetterGrow /></Tool>
                    <Tool $width={20} aria-label="縮小"><LetterGrow down /></Tool>
                </ToolRow>
                <ToolRow>
                    <Tool $width={23}><Letter>B</Letter></Tool>
                    <Tool $width={23}><Letter $italic>I</Letter></Tool>
                    <Tool $width={36}><Letter $underline>U</Letter><Arrow /></Tool>
                    <Divider />
                    <Tool $width={36} aria-label="罫線"><BorderIcon /><Arrow /></Tool>
                    <Divider />
                    <Tool $width={34} aria-label="塗りつぶし"><FillIcon /><Arrow /></Tool>
                    <Tool $width={34} aria-label="フォントの色"><FontColorIcon /><Arrow /></Tool>
                    <Divider />
                    <Tool $width={36} aria-label="ふりがな"><RubyIcon /><Arrow /></Tool>
                </ToolRow>
            </Stack>
        </RibbonGroup>
        <RibbonGroup label="配置" width={293} pad="6px 0 0 5px" launcher>
            <Stack>
                <ToolRow>
                    <Tool $width={23} aria-label="上揃え"><LinesIcon kind="full" /></Tool>
                    <Tool $width={24} $on aria-label="上下中央揃え"><LinesIcon kind="full" top={4} /></Tool>
                    <Tool $width={23} aria-label="下揃え"><LinesIcon kind="full" top={6} /></Tool>
                    <Divider />
                    <Tool $width={32} aria-label="方向"><RotateIcon /><Arrow /></Tool>
                </ToolRow>
                <ToolRow>
                    <Tool $width={23} aria-label="左揃え"><LinesIcon kind="left" /></Tool>
                    <Tool $width={24} aria-label="中央揃え"><LinesIcon kind="center" /></Tool>
                    <Tool $width={23} aria-label="右揃え"><LinesIcon kind="right" /></Tool>
                    <Divider />
                    <Tool $width={24} aria-label="インデントを減らす"><IndentIcon /></Tool>
                    <Tool $width={23} aria-label="インデントを増やす"><IndentIcon right /></Tool>
                </ToolRow>
            </Stack>
            <Divider $tall />
            <Stack>
                <ToolRow>
                    <Tool $left><WrapIcon />折り返して全体を表示する</Tool>
                </ToolRow>
                <ToolRow>
                    <Tool $left><MergeIcon />セルを結合して中央揃え<Arrow /></Tool>
                </ToolRow>
            </Stack>
        </RibbonGroup>
        <RibbonGroup label="数値" width={143} pad="6px 0 0 5px" launcher>
            <Stack>
                <ToolRow>
                    <Select label="表示形式" width={134} value="標準" />
                </ToolRow>
                <ToolRow>
                    <Tool $width={34} aria-label="通貨"><MoneyIcon /><Arrow /></Tool>
                    <Tool $width={23}><Letter $size={13}>%</Letter></Tool>
                    <Tool $width={23}><Letter $size={18}>,</Letter></Tool>
                    <Divider />
                    <Tool $width={23} aria-label="小数点以下を増やす"><DecimalIcon /></Tool>
                    <Tool $width={23} aria-label="小数点以下を減らす"><DecimalIcon less /></Tool>
                </ToolRow>
            </Stack>
        </RibbonGroup>
        <RibbonGroup label="スタイル" width={178} pad="6px 0 0 1px">
            <Big icon={<ConditionIcon />} lines={["条件付き", "書式"]} width={56} />
            <Big icon={<TableStyleIcon />} lines={["テーブルとして", "書式設定"]} width={66} />
            <Big icon={<CellStyleIcon />} lines={["セルの", "スタイル"]} width={52} />
        </RibbonGroup>
        <RibbonGroup label="セル" width={135} pad="6px 0 0 4px">
            <Big icon={<InsertIcon />} lines={["挿入", ""]} width={42} />
            <Big icon={<DeleteIcon />} lines={["削除", ""]} width={42} />
            <Big icon={<FormatIcon />} lines={["書式", ""]} width={42} />
        </RibbonGroup>
        <RibbonGroup label="編集" width={202} pad="2px 0 0 9px">
            <Stack>
                <Tool $left $width={92}><SigmaIcon />オート SUM<Arrow /></Tool>
                <Tool $left><FillDownIcon />フィル<Arrow /></Tool>
                <Tool $left><EraserIcon />クリア<Arrow /></Tool>
            </Stack>
            <GroupBody $pad="4px 0 0">
                <Big icon={<SortIcon />} lines={["並べ替えと", "フィルター"]} width={54} />
                <Big icon={<FindIcon />} lines={["検索と", "選択"]} width={44} />
            </GroupBody>
        </RibbonGroup>
    </RibbonBar>
);

const Sheet = () => (
    <SheetArea>
        <Grid>
            <colgroup>
                <col style={{ width: 37 }} />
                {columns.map(([name, width]) => (
                    <col key={name} style={{ width: width || "auto" }} />
                ))}
            </colgroup>
            <thead>
                <tr>
                    <Corner>
                        <svg width="14" height="14" viewBox="0 0 14 14"><path d="M13 0v13H0z" fill="#b6bcc2" /></svg>
                    </Corner>
                    {columns.map(([name]) => (
                        <HeadCell key={name} scope="col" $on={name === "J"}>{name}</HeadCell>
                    ))}
                </tr>
            </thead>
            <tbody>
                <tr>
                    <HeadCell scope="row">1</HeadCell>
                    <Cell colSpan={3} $fill="blue" $align="center" $open>キャラ</Cell>
                    <Cell colSpan={8} $fill="blue" $align="center">レベルアップ前</Cell>
                    <Cell colSpan={9} $fill="red" $align="center" $open>レベルアップ後</Cell>
                </tr>
                <tr>
                    <HeadCell scope="row">2</HeadCell>
                    {titles.map((title, i) => (
                        <Cell key={i} $fill={i < 11 ? "blue" : "red"}>{title}</Cell>
                    ))}
                </tr>
                {records.map(([row, ...values]) => (
                    <tr key={row}>
                        <HeadCell scope="row">{row}</HeadCell>
                        {values.map((value, i) => {
                            const isName = typeof value === "string";
                            return (
                                <Cell key={i} $fill={fillOf(i)} $name={isName} $align={isName ? "left" : "right"}>{value}</Cell>
                            );
                        })}
                    </tr>
                ))}
                {emptyRows.map((row) => (
                    <tr key={row}>
                        <HeadCell scope="row" $on={row === 7}>{row}</HeadCell>
                        {row === 7 && (
                            <>
                                <td colSpan={9} />
                                <EmptyCell><Selection /></EmptyCell>
                            </>
                        )}
                    </tr>
                ))}
            </tbody>
        </Grid>
        <Callout>
            <CalloutTail width="45" height="37" viewBox="0 0 45 37">
                <path d="M45 7H43L1 4l42 12h2z" fill="#4f81bd" />
                <path d="M43.500 7L1 4l42.500 11" fill="none" stroke="#385d8a" strokeWidth="2" />
            </CalloutTail>
            <CalloutText>所定の行で<kbd>Ctrl+P</kbd>を押すと。。。</CalloutText>
        </Callout>
    </SheetArea>
);

const App = () => {
    const [formula, setFormula] = useState("");
    const [zoom, setZoom] = useState(54);

    return (
        <Window>
            <GlobalStyle />
            <Glass>
                <TitleBar>
                    <QuickAccess>
                        <ExcelLogo />
                        <Divider $gap={1} />
                        <SaveIcon />
                        <Tool aria-label="元に戻す"><UndoIcon /><Arrow color="#9aa7b8" /></Tool>
                        <Tool aria-label="やり直し"><UndoIcon flip /><Arrow color="#9aa7b8" /></Tool>
                        <Divider $gap={1} />
                        <svg width="7" height="7" viewBox="0 0 7 7"><path d="M0 .5h7" stroke="#111" /><path d="M0 3h7L3.500 6.500z" fill="#111" /></svg>
                    </QuickAccess>
                    <Title>ファンキルピン計算機ver.2.1&nbsp; -&nbsp; Microsoft Excel</Title>
                    <WindowButtons>
                        <WindowButton aria-label="最小化"><MinimizeShape /></WindowButton>
                        <WindowButton aria-label="元に戻す"><RestoreShape /></WindowButton>
                        <WindowButton $close aria-label="閉じる"><CloseShape /></WindowButton>
                    </WindowButtons>
                </TitleBar>
                <TabBar>
                    <FileTab>ファイル</FileTab>
                    {tabs.map((tab, i) => (
                        <Tab key={tab} $active={i === 0}>{tab}</Tab>
                    ))}
                    <TabTools>
                        <TabTool aria-label="リボンの最小化">
                            <svg width="10" height="8" viewBox="0 0 10 8"><path d="M5 .8L9 4.500 7.500 6.500 5 4.500 2.500 6.500 1 4.500z" fill="#fff" stroke="#4b5665" /></svg>
                        </TabTool>
                        <TabTool aria-label="ヘルプ">
                            <svg width="16" height="16" viewBox="0 0 16 16">
                                <circle cx="8" cy="8" r="7.500" fill="#3f74cf" stroke="#2b5098" />
                                <text x="8" y="13" textAnchor="middle" fontFamily="Liberation Sans, sans-serif" fontWeight="700" fontSize="13" fill="#fff">?</text>
                            </svg>
                        </TabTool>
                        <TabTool aria-label="ウィンドウを最小化"><MinimizeShape /></TabTool>
                        <TabTool aria-label="ウィンドウを元に戻す"><RestoreShape /></TabTool>
                        <TabTool aria-label="ウィンドウを閉じる"><CloseShape /></TabTool>
                    </TabTools>
                </TabBar>
            </Glass>
            <Ribbon />
            <FormulaBar>
                <NameBox>
                    <input aria-label="名前ボックス" defaultValue="J7" />
                    <svg width="7" height="4" viewBox="0 0 7 4"><path d="M0 0h7L3.500 4z" fill="#333" /></svg>
                </NameBox>
                <FxArea>
                    <Knob />
                    <Letter $italic $size={14}>fx</Letter>
                </FxArea>
                <FormulaInput aria-label="数式バー" value={formula} onChange={(e) => setFormula(e.target.value)} />
                <ExpandButton aria-label="数式バーの展開">
                    <svg width="8" height="6" viewBox="0 0 8 6"><path d="M1 1l3 3 3-3" fill="none" stroke="#4a5059" strokeWidth="2" /></svg>
                </ExpandButton>
            </FormulaBar>
            <Workspace>
                <Sheet />
                <VScroll>
                    <SplitBox />
                    <ScrollArrow aria-label="上へ"><Triangle dir="up" /></ScrollArrow>
                    <VThumb><Grip /></VThumb>
                    <VRest />
                    <ScrollArrow aria-label="下へ"><Triangle dir="down" /></ScrollArrow>
                </VScroll>
                <Edge />
            </Workspace>
            <SheetBar>
                <SheetTabs>
                    <NavButton aria-label="先頭"><Triangle dir="left" bar /></NavButton>
                    <NavButton aria-label="前"><Triangle dir="left" /></NavButton>
                    <NavButton aria-label="次"><Triangle dir="right" /></NavButton>
                    <NavButton aria-label="末尾"><Triangle dir="right" bar /></NavButton>
                    <SheetTab>Sheet1</SheetTab>
                    <SheetTab $active>リスト</SheetTab>
                    <NewSheetIcon />
                </SheetTabs>
                <HScroll>
                    <SplitHandle />
                    <ScrollArrow aria-label="左へ"><Triangle dir="left" /></ScrollArrow>
                    <HThumb><Grip vertical /></HThumb>
                    <HRest />
                    <ScrollArrow aria-label="右へ"><Triangle dir="right" /></ScrollArrow>
                    <SplitHandle />
                </HScroll>
            </SheetBar>
            <StatusBar>
                コマンド
                <StatusRule />
                <MacroIcon />
                <StatusRule $gap={10} />
                <TabTools>
                    <StatusRule $gap={3} />
                    <ViewButton $on aria-label="標準"><ViewIcon kind="grid" /></ViewButton>
                    <ViewButton aria-label="ページ レイアウト"><ViewIcon kind="page" /></ViewButton>
                    <ViewButton aria-label="改ページ プレビュー"><ViewIcon kind="break" /></ViewButton>
                    <ZoomValue>120%</ZoomValue>
                    <RoundButton aria-label="縮小"><svg width="8" height="8" viewBox="0 0 8 8"><path d="M0 4h8" stroke="#4a5059" strokeWidth="2" /></svg></RoundButton>
                    <ZoomSlider type="range" aria-label="ズーム" value={zoom} onChange={(e) => setZoom(e.target.value)} />
                    <RoundButton aria-label="拡大"><svg width="8" height="8" viewBox="0 0 8 8"><path d="M0 4h8M4 0v8" stroke="#4a5059" strokeWidth="2" /></svg></RoundButton>
                </TabTools>
            </StatusBar>
        </Window>
    );
};

export default App;
